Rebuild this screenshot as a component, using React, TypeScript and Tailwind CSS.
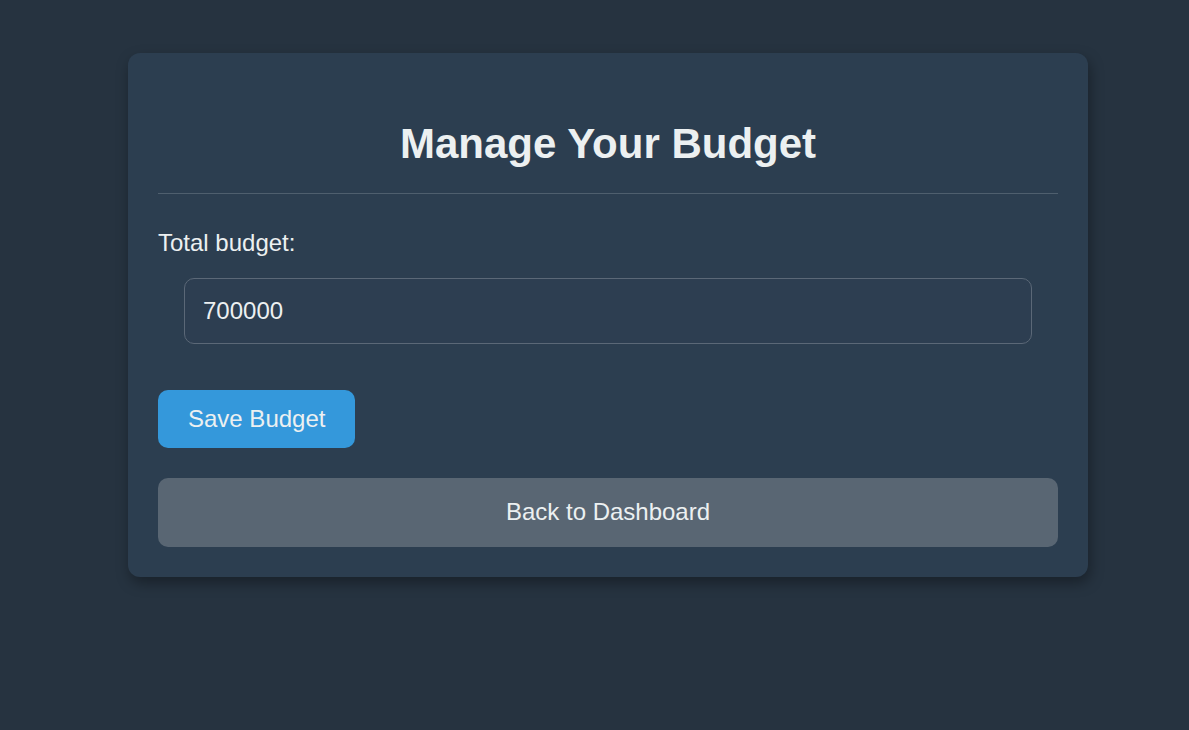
export default function App() {
  return (
    <main className="min-h-screen bg-[#263340] pt-[53px] pl-[128px] font-['Liberation_Sans',Arial,sans-serif] text-[#ecf0f1]">
      <div className="w-[960px] rounded-[12px] bg-[#2c3e50] px-[30px] pt-[30px] pb-[30px] shadow-[2px_6px_14px_rgba(0,0,0,0.35)]">
        {/* Header */}
        <div className="border-b border-[#4f5f6e] pt-[37px] pb-[25px] text-center">
          <h2 className="text-[42px] font-bold leading-[1.15]">Manage Your Budget</h2>
        </div>

        <form className="flex flex-col" onSubmit={(e) => e.preventDefault()}>
          <label className="mt-[35px] text-[24px] leading-[1.15]">Total budget:</label>
          <input
            type="number"
            defaultValue={700000}
            className="ml-[26px] mt-[21px] h-[66px] w-[848px] rounded-[10px] border border-[#5b6877] bg-[#2d3e51] px-[18px] text-[24px] text-[#ecf0f1] outline-none [appearance:textfield] [&::-webkit-inner-spin-button]:appearance-none"
          />
          <div className="mt-[46px]">
            <button className="h-[58px] rounded-[10px] bg-[#3498db] px-[30px] text-[24px] text-[#ecf0f1]">
              Save Budget
            </button>
          </div>
        </form>

        <button className="mt-[30px] h-[69px] w-full rounded-[10px] bg-[#596673] text-[24px] text-[#ecf0f1]">
          Back to Dashboard
        </button>
      </div>
    </main>
  );
}
